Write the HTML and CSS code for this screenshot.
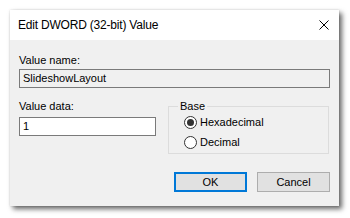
FILE: index.html
```html
<!DOCTYPE html>
<html>
<head>
<meta charset="utf-8">
<link rel="stylesheet" href="styles.css">
</head>
<body>
<div class="window">
  <div class="titlebar">
    <span class="title">Edit DWORD (32-bit) Value</span>
    <svg class="close" width="10" height="10" viewBox="0 0 10 10"><path d="M0.5 0.5 L9.5 9.5 M9.5 0.5 L0.5 9.5" stroke="#000" stroke-width="1" fill="none"/></svg>
  </div>
  <div class="content">
    <div class="label name-label">Value name:</div>
    <div class="field readonly">SlideshowLayout</div>
    <div class="row">
      <div class="col">
        <div class="label data-label">Value data:</div>
        <div class="field data">1</div>
      </div>
      <fieldset class="group">
        <legend>Base</legend>
        <div class="radio"><span class="dot checked"></span>Hexadecimal</div>
        <div class="radio"><span class="dot"></span>Decimal</div>
      </fieldset>
    </div>
    <div class="buttons">
      <div class="btn ok">OK</div>
      <div class="btn">Cancel</div>
    </div>
  </div>
</div>
</body>
</html>
```
FILE: styles.css
```css
html, body { margin: 0; padding: 0; background: #fff; }
body { font-family: "Liberation Sans", Arial, sans-serif; font-size: 11px; color: #000; width: 350px; height: 218px; overflow: hidden; }
.window {
  margin: 10px 0 0 10px;
  width: 329px;
  height: 196px;
  background: #f0f0f0;
  box-shadow: 3px 3px 5px rgba(0,0,0,0.6), 0 0 2px rgba(0,0,0,0.15);
  box-sizing: border-box;
  display: flex;
  flex-direction: column;
}
.titlebar {
  height: 30px;
  background: #fff;
  display: flex;
  align-items: center;
  justify-content: space-between;
  padding: 0 10px 0 8px;
  flex: none;
}
.title { font-size: 12px; letter-spacing: -0.2px; }
.close { display: block; }
.content { padding: 0 9px; display: flex; flex-direction: column; }
.label { line-height: 14px; }
.name-label { margin-top: 13px; }
.field {
  border: 1px solid #7a7a7a;
  height: 19px;
  box-sizing: border-box;
  line-height: 17px;
  padding-left: 3px;
}
.readonly { background: #f0f0f0; margin-top: 2px; width: 311px; }
.row { display: flex; margin-top: 13px; }
.col { width: 137px; display: flex; flex-direction: column; }
.data-label { margin-top: -2px; }
.data { background: #fff; margin-top: 4px; }
.group {
  margin: 0 0 0 12px;
  width: 161px;
  height: 54px;
  box-sizing: border-box;
  border: 1px solid #dcdcdc;
  padding: 0 0 0 15px;
  margin-top: -1px;
}
.group legend { padding: 0 2px; margin-left: -6px; line-height: 12px; }
.radio { display: flex; align-items: center; height: 20px; }
.radio:first-of-type { margin-top: 0; }
.dot {
  width: 13px; height: 13px; box-sizing: border-box;
  border: 1px solid #333; border-radius: 50%; background: #fff;
  margin-right: 3px; position: relative; flex: none;
}
.dot.checked::after {
  content: ""; position: absolute; left: 2px; top: 2px; width: 7px; height: 7px; border-radius: 50%; background: #333;
}
.buttons { display: flex; justify-content: flex-end; gap: 10px; margin-top: 18px; }
.btn {
  width: 73px; height: 20px; box-sizing: border-box;
  background: #e1e1e1; border: 1px solid #adadad;
  text-align: center; line-height: 18px;
}
.btn.ok { border: 2px solid #0078d7; line-height: 16px; }
```
